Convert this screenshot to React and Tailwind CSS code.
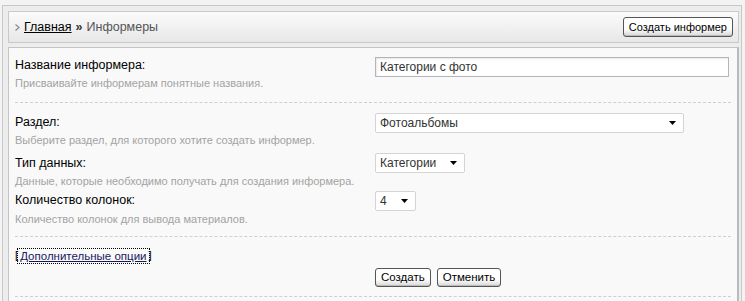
import React from "react";

const Arrow = () => (
  <svg width="7" height="4" viewBox="0 0 7 4" className="shrink-0">
    <path d="M0 0h7L3.5 4z" fill="#000" />
  </svg>
);

const FakeSelect = ({ value, width }) => (
  <div
    className={`${width} h-[20px] flex items-center justify-between bg-white border border-[#d4d4d4] rounded-[2px] pl-[4px] pr-[7px] text-[12px] text-[#333]`}
  >
    <span>{value}</span>
    <Arrow />
  </div>
);

const OldButton = ({ children, className = "" }) => (
  <button
    className={`h-[19px] px-[5px] border border-[#555] rounded-[3px] bg-gradient-to-b from-white from-60% to-[#d6d6d6] text-[11.5px] leading-none text-black shadow-[inset_0_-1px_0_#bbb] ${className}`}
  >
    {children}
  </button>
);

const Field = ({ label, hint, labelGap, hintGap }) => (
  <div className="flex flex-col whitespace-nowrap">
    <div className={`${labelGap} leading-[16px] text-[12.5px] text-black`}>{label}</div>
    <div className={`${hintGap} leading-[14px] text-[11px] text-[#a3a3a3]`}>{hint}</div>
  </div>
);

export default function App() {
  return (
    <div className="w-[745px] h-[301px] overflow-hidden bg-[#f3f3f3] pt-[5px] pl-[2px] font-['Liberation_Sans',Tahoma,sans-serif]">
      <div className="w-[740px] h-[300px] border-l border-t border-r border-[#c8c8c8] bg-[#ededed] pt-[5px] pl-[5px] pr-[2px]">
        {/* Header */}
        <div className="h-[32px] border border-[#c9c9c9] bg-gradient-to-b from-[#fbfbfb] to-[#e7e7e7] flex items-center justify-between pl-[6px] pr-[5px]">
          <div className="flex items-center text-[12.5px]">
            <svg width="5" height="7" viewBox="0 0 5 7" className="mr-[4px] mt-[1px]">
              <path d="M0.5 0.5L4 3.5L0.5 6.5" stroke="#8a8a8a" strokeWidth="1.2" fill="none" />
            </svg>
            <a href="#" className="text-black underline">Главная</a>
            <span className="mx-[4px] font-bold text-[#333]">»</span>
            <span className="text-[#555]">Информеры</span>
          </div>
          <OldButton className="h-[20px] px-[5px] text-[11px]">Создать информер</OldButton>
        </div>

        {/* Content */}
        <div className="mt-[4px] h-[260px] border border-[#c4c4c4] border-r-[2px] border-r-[#b9b9c0] bg-[#f9f9f9] px-[6px]">
          {/* name */}
          <div className="grid grid-cols-[360px_1fr] pt-[9px] pb-[12px] border-b border-dashed border-[#cfcfcf]">
            <Field
              label="Название информера:"
              hint="Присваивайте информерам понятные названия."
              labelGap="mt-0"
              hintGap="mt-[3px]"
            />
            <div className="h-[20px] w-[354px] bg-white border border-[#b4b4bc] shadow-[inset_1px_1px_2px_#e6e6e6] flex items-center px-[4px] text-[12px] text-[#333]">
              Категории с фото
            </div>
          </div>

          {/* section */}
          <div className="grid grid-cols-[360px_1fr] pt-[10px]">
            <Field
              label="Раздел:"
              hint="Выберите раздел, для которого хотите создать информер."
              labelGap="mt-[1px]"
              hintGap="mt-[3px]"
            />
            <FakeSelect value="Фотоальбомы" width="w-[309px]" />
          </div>

          {/* type */}
          <div className="grid grid-cols-[360px_1fr] pt-[6px]">
            <Field
              label="Тип данных:"
              hint="Данные, которые необходимо получать для создания информера."
              labelGap="mt-[2px]"
              hintGap="mt-[3px]"
            />
            <FakeSelect value="Категории" width="w-[90px]" />
          </div>

          {/* columns */}
          <div className="grid grid-cols-[360px_1fr] pt-[3px] pb-[10px] border-b border-dashed border-[#cfcfcf]">
            <Field
              label="Количество колонок:"
              hint="Количество колонок для вывода материалов."
              labelGap="mt-[1px]"
              hintGap="mt-[4px]"
            />
            <FakeSelect value="4" width="w-[41px]" />
          </div>

          {/* actions */}
          <div className="pt-[11px] pb-[9px] border-b border-dashed border-[#cfcfcf]">
            <div className="h-[16px] text-[11.5px] text-black flex items-center">
              <span>[</span>
              <a href="#" className="outline-1 outline-dotted outline-black underline text-[#1a1a60] px-[2px] leading-[14px]">
                Дополнительные опции
              </a>
              <span>]</span>
            </div>
            <div className="mt-[4px] pl-[360px] flex gap-[6px]">
              <OldButton>Создать</OldButton>
              <OldButton>Отменить</OldButton>
            </div>
          </div>
        </div>
      </div>
    </div>
  );
}
